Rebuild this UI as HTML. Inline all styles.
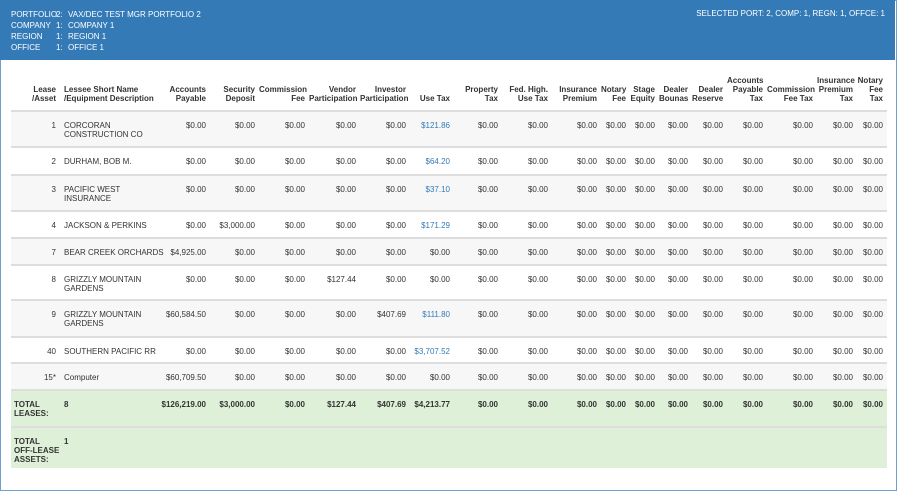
<!DOCTYPE html><html><head><style>
body{margin:0;width:898px;height:493px;background:#fff;font-family:"Liberation Sans",sans-serif;font-size:8px;color:#333;overflow:hidden}
.frame{position:absolute;left:0;top:0;width:895px;height:489px;border:1px solid #6f9fcf}
.hdr{position:absolute;left:0;top:0;width:895px;height:60px;background:#337ab7;color:#fff}
.hl{position:absolute;left:11px;top:9px;line-height:11px;font-size:8px}
.hl span{display:inline-block}
.hr{position:absolute;right:10px;top:9px;font-size:8px}
table{position:absolute;left:11px;top:62px;border-collapse:collapse;table-layout:fixed;width:876px}
td,th{padding:0 4px 0 0;text-align:right;vertical-align:top;line-height:9px;overflow:visible;white-space:nowrap}
th{vertical-align:bottom;font-weight:bold;padding-bottom:7px;height:41px;border-bottom:2px solid #ddd}
td{padding-top:9px;border-bottom:2px solid #ddd}
td.n,th.n{text-align:left;padding-left:4px}
tr.g td{background:#f7f7f7}
tr.t td{background:#dff0d8;font-weight:bold}
td.l{text-align:left;padding-left:3px}
a{color:#337ab7;text-decoration:none}
</style></head><body>
<div class="frame"></div>
<div class="hdr">
<div class="hl"><span style="width:45px">PORTFOLIO</span><span style="width:12px">2:</span>VAX/DEC TEST MGR PORTFOLIO 2<br><span style="width:45px">COMPANY</span><span style="width:12px">1:</span>COMPANY 1<br><span style="width:45px">REGION</span><span style="width:12px">1:</span>REGION 1<br><span style="width:45px">OFFICE</span><span style="width:12px">1:</span>OFFICE 1</div>
<div class="hr">SELECTED PORT: 2, COMP: 1, REGN: 1, OFFCE: 1</div>
</div>
<table>
<colgroup><col style="width:49px"><col style="width:100px"><col style="width:50px"><col style="width:49px"><col style="width:50px"><col style="width:51px"><col style="width:50px"><col style="width:44px"><col style="width:48px"><col style="width:50px"><col style="width:49px"><col style="width:29px"><col style="width:29px"><col style="width:33px"><col style="width:35px"><col style="width:40px"><col style="width:50px"><col style="width:40px"><col style="width:30px"></colgroup>
<tr><th>Lease<br>/Asset</th><th class="n">Lessee Short Name<br>/Equipment Description</th><th>Accounts<br>Payable</th><th>Security<br>Deposit</th><th>Commission<br>Fee</th><th>Vendor<br>Participation</th><th>Investor<br>Participation</th><th>Use Tax</th><th>Property<br>Tax</th><th>Fed. High.<br>Use Tax</th><th>Insurance<br>Premium</th><th>Notary<br>Fee</th><th>Stage<br>Equity</th><th>Dealer<br>Bounas</th><th>Dealer<br>Reserve</th><th>Accounts<br>Payable<br>Tax</th><th>Commission<br>Fee Tax</th><th>Insurance<br>Premium<br>Tax</th><th>Notary<br>Fee<br>Tax</th></tr>
<tr class="g" style="height:36px"><td>1</td><td class="n">CORCORAN<br>CONSTRUCTION CO</td><td>$0.00</td><td>$0.00</td><td>$0.00</td><td>$0.00</td><td>$0.00</td><td><a>$121.86</a></td><td>$0.00</td><td>$0.00</td><td>$0.00</td><td>$0.00</td><td>$0.00</td><td>$0.00</td><td>$0.00</td><td>$0.00</td><td>$0.00</td><td>$0.00</td><td>$0.00</td></tr>
<tr style="height:28px"><td>2</td><td class="n">DURHAM, BOB M.</td><td>$0.00</td><td>$0.00</td><td>$0.00</td><td>$0.00</td><td>$0.00</td><td><a>$64.20</a></td><td>$0.00</td><td>$0.00</td><td>$0.00</td><td>$0.00</td><td>$0.00</td><td>$0.00</td><td>$0.00</td><td>$0.00</td><td>$0.00</td><td>$0.00</td><td>$0.00</td></tr>
<tr class="g" style="height:36px"><td>3</td><td class="n">PACIFIC WEST<br>INSURANCE</td><td>$0.00</td><td>$0.00</td><td>$0.00</td><td>$0.00</td><td>$0.00</td><td><a>$37.10</a></td><td>$0.00</td><td>$0.00</td><td>$0.00</td><td>$0.00</td><td>$0.00</td><td>$0.00</td><td>$0.00</td><td>$0.00</td><td>$0.00</td><td>$0.00</td><td>$0.00</td></tr>
<tr style="height:27px"><td>4</td><td class="n">JACKSON &amp; PERKINS</td><td>$0.00</td><td>$3,000.00</td><td>$0.00</td><td>$0.00</td><td>$0.00</td><td><a>$171.29</a></td><td>$0.00</td><td>$0.00</td><td>$0.00</td><td>$0.00</td><td>$0.00</td><td>$0.00</td><td>$0.00</td><td>$0.00</td><td>$0.00</td><td>$0.00</td><td>$0.00</td></tr>
<tr class="g" style="height:27px"><td>7</td><td class="n">BEAR CREEK ORCHARDS</td><td>$4,925.00</td><td>$0.00</td><td>$0.00</td><td>$0.00</td><td>$0.00</td><td>$0.00</td><td>$0.00</td><td>$0.00</td><td>$0.00</td><td>$0.00</td><td>$0.00</td><td>$0.00</td><td>$0.00</td><td>$0.00</td><td>$0.00</td><td>$0.00</td><td>$0.00</td></tr>
<tr style="height:35px"><td>8</td><td class="n">GRIZZLY MOUNTAIN<br>GARDENS</td><td>$0.00</td><td>$0.00</td><td>$0.00</td><td>$127.44</td><td>$0.00</td><td>$0.00</td><td>$0.00</td><td>$0.00</td><td>$0.00</td><td>$0.00</td><td>$0.00</td><td>$0.00</td><td>$0.00</td><td>$0.00</td><td>$0.00</td><td>$0.00</td><td>$0.00</td></tr>
<tr class="g" style="height:37px"><td>9</td><td class="n">GRIZZLY MOUNTAIN<br>GARDENS</td><td>$60,584.50</td><td>$0.00</td><td>$0.00</td><td>$0.00</td><td>$407.69</td><td><a>$111.80</a></td><td>$0.00</td><td>$0.00</td><td>$0.00</td><td>$0.00</td><td>$0.00</td><td>$0.00</td><td>$0.00</td><td>$0.00</td><td>$0.00</td><td>$0.00</td><td>$0.00</td></tr>
<tr style="height:26px"><td>40</td><td class="n">SOUTHERN PACIFIC RR</td><td>$0.00</td><td>$0.00</td><td>$0.00</td><td>$0.00</td><td>$0.00</td><td><a>$3,707.52</a></td><td>$0.00</td><td>$0.00</td><td>$0.00</td><td>$0.00</td><td>$0.00</td><td>$0.00</td><td>$0.00</td><td>$0.00</td><td>$0.00</td><td>$0.00</td><td>$0.00</td></tr>
<tr class="g" style="height:27px"><td>15*</td><td class="n">Computer</td><td>$60,709.50</td><td>$0.00</td><td>$0.00</td><td>$0.00</td><td>$0.00</td><td>$0.00</td><td>$0.00</td><td>$0.00</td><td>$0.00</td><td>$0.00</td><td>$0.00</td><td>$0.00</td><td>$0.00</td><td>$0.00</td><td>$0.00</td><td>$0.00</td><td>$0.00</td></tr>
<tr class="t" style="height:37px"><td class="l">TOTAL<br>LEASES:</td><td class="n">8</td><td>$126,219.00</td><td>$3,000.00</td><td>$0.00</td><td>$127.44</td><td>$407.69</td><td>$4,213.77</td><td>$0.00</td><td>$0.00</td><td>$0.00</td><td>$0.00</td><td>$0.00</td><td>$0.00</td><td>$0.00</td><td>$0.00</td><td>$0.00</td><td>$0.00</td><td>$0.00</td></tr>
<tr class="t" style="height:41px"><td class="l" style="border:0">TOTAL<br>OFF-LEASE<br>ASSETS:</td><td class="n" style="border:0">1</td><td style="border:0" colspan="17"></td></tr>
</table>
</body></html>
